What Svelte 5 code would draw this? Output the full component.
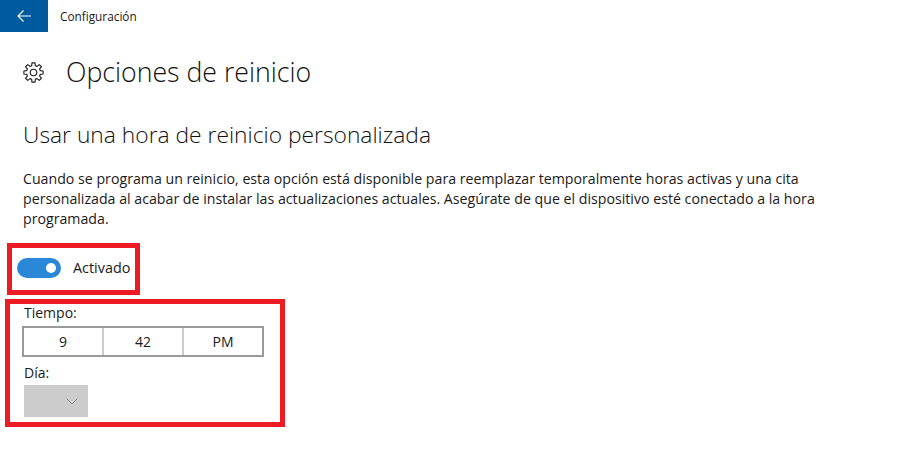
<script>
  const parts = ['9', '42', 'PM'];

  // gear outline: 8 teeth around the centre of a 22x22 box
  const pt = (r, deg) => {
    const a = (deg * Math.PI) / 180;
    return (11 + r * Math.cos(a)).toFixed(2) + ' ' + (11 + r * Math.sin(a)).toFixed(2);
  };
  let gearPath = '';
  for (let i = 0; i < 8; i++) {
    const c = i * 45 - 90;
    gearPath += (i ? 'L' : 'M') + pt(7.4, c - 15) + 'L' + pt(10.2, c - 9) + 'L' + pt(10.2, c + 9) + 'L' + pt(7.4, c + 15);
  }
  gearPath += 'Z';
</script>

<div class="page">
  <header class="topbar">
    <div class="back">
      <svg width="16" height="16" viewBox="0 0 16 16" fill="none" stroke="#fff" stroke-width="1.1">
        <path d="M15 8H2M7.500 2.500 2 8l5.500 5.500" />
      </svg>
    </div>
    <span class="app-title">Configuración</span>
  </header>

  <div class="heading">
    <svg class="gear" width="21" height="21" viewBox="0 0 22 22" fill="none" stroke="#222" stroke-width="1.200" stroke-linejoin="round">
      <path d={gearPath} />
      <circle cx="11" cy="11" r="3.400" />
    </svg>
    <h1>Opciones de reinicio</h1>
  </div>

  <h2>Usar una hora de reinicio personalizada</h2>

  <p class="desc">
    Cuando se programa un reinicio, esta opción está disponible para reemplazar temporalmente horas activas y una cita<br />
    personalizada al acabar de instalar las actualizaciones actuales. Asegúrate de que el dispositivo esté conectado a la hora<br />
    programada.
  </p>

  <div class="box toggle-box">
    <span class="toggle"><span class="knob"></span></span>
    <span class="toggle-label">Activado</span>
  </div>

  <div class="box time-box">
    <div class="label first">Tiempo:</div>
    <div class="time">
      {#each parts as part}
        <div class="cell">{part}</div>
      {/each}
    </div>
    <div class="label day-label">Día:</div>
    <div class="select">
      <svg width="12" height="7" viewBox="0 0 12 7" fill="none" stroke="#8e8e8e" stroke-width="1">
        <path d="M.5.500 6 6l5.500-5.500" />
      </svg>
    </div>
  </div>
</div>

<style>
  :global(body) {
    background: #fff;
  }

  .page {
    width: 918px;
    height: 476px;
    overflow: hidden;
    background: #fff;
    color: #1a1a1a;
    font-family: "Open Sans", "Noto Sans", sans-serif;
  }

  .topbar {
    display: flex;
    align-items: center;
    height: 32px;
  }

  .back {
    display: flex;
    align-items: center;
    justify-content: center;
    width: 48px;
    height: 32px;
    background: #005a9e;
  }

  .app-title {
    margin: -1px 0 0 12px;
    font-size: 11.8px;
  }

  .heading {
    display: flex;
    align-items: center;
    margin: 18px 0 0 23px;
    height: 44px;
  }

  .gear {
    flex: none;
  }

  h1 {
    margin: 0 0 0 22px;
    font-size: 26.7px;
    font-weight: 300;
    line-height: 44px;
    color: #111;
  }

  h2 {
    margin: 26px 0 0 23px;
    font-size: 22.8px;
    font-weight: 300;
    line-height: 30px;
    color: #111;
  }

  .desc {
    margin: 19px 0 0 23px;
    font-size: 14.18px;
    line-height: 20px;
    white-space: nowrap;
  }

  .box {
    box-sizing: border-box;
    border: 5px solid #ed1c24;
  }

  .toggle-box {
    display: flex;
    align-items: center;
    width: 133px;
    height: 52px;
    margin: 14px 0 0 7px;
    padding: 0 0 3px 5px;
  }

  .toggle {
    display: flex;
    align-items: center;
    justify-content: flex-end;
    box-sizing: border-box;
    width: 44px;
    height: 20px;
    padding-right: 5px;
    border-radius: 10px;
    background: #2b88d8;
  }

  .knob {
    width: 10px;
    height: 10px;
    border-radius: 50%;
    background: #fff;
  }

  .toggle-label {
    margin-left: 12px;
    font-size: 14.4px;
  }

  .time-box {
    width: 280px;
    height: 128px;
    margin: 4px 0 0 5px;
    padding-left: 14px;
  }

  .label {
    font-size: 14px;
    line-height: 20px;
  }

  .first {
    line-height: 18px;
  }

  .time {
    display: flex;
    box-sizing: border-box;
    width: 242px;
    height: 31px;
    margin: 4px 0 0 -2px;
    border: 2px solid #999;
  }

  .cell {
    flex: 1;
    text-align: center;
    font-size: 14px;
    line-height: 27px;
    border-left: 2px solid #ccc;
  }

  .cell:first-child {
    border-left: none;
  }

  .day-label {
    margin-top: 6px;
  }

  .select {
    display: flex;
    align-items: center;
    justify-content: flex-end;
    box-sizing: border-box;
    width: 64px;
    height: 32px;
    margin-top: 2px;
    padding-right: 10px;
    background: #ccc;
  }
</style>
